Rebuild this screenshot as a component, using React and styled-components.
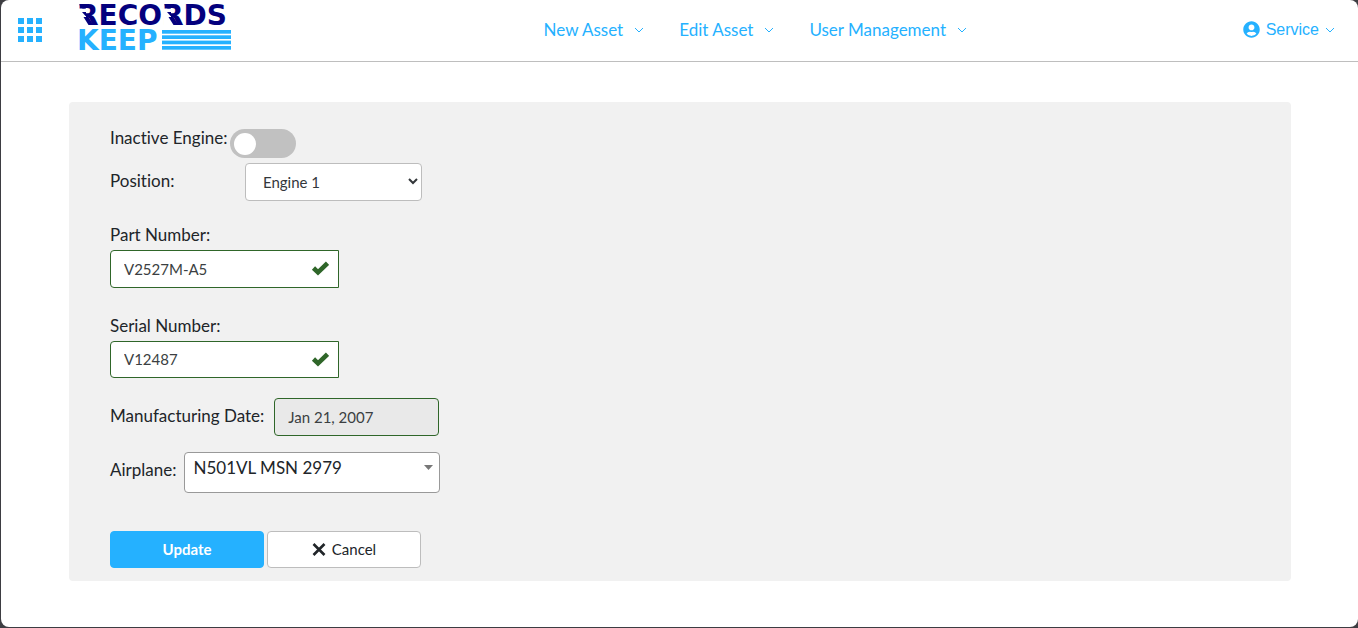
import React, { useState } from 'react'
import styled, { createGlobalStyle } from 'styled-components'
import { FaUserCircle } from 'react-icons/fa'

const blue = '#25b1ff'
const navy = '#04007d'
const green = '#2f6629'

const GlobalStyle = createGlobalStyle`
* {
  box-sizing: border-box;
}
body {
  margin: 0;
  background: #3d3d42;
  color: #212529;
  font-family: Lato, "Liberation Sans", sans-serif;
  font-size: 17px;
  font-variant-ligatures: none;
}
button, input, select {
  margin: 0;
  color: inherit;
  font-family: inherit;
}
`

const Page = styled.div`
  min-height: calc(100vh - 1px);
  margin: 0 0 1px 1px;
  background: #fff;
  border-radius: 8px;
`

const Header = styled.header`
  display: flex;
  align-items: center;
  justify-content: space-between;
  height: 62px;
  padding: 0 23px 2px 17px;
  border-bottom: 1px solid #bebebe;
`

const Brand = styled.div`
  display: flex;
  align-items: center;
  gap: 37px;
  min-width: 250px;
`

const IconButton = styled.button`
  display: flex;
  padding: 0;
  border: 0;
  background: none;
  cursor: pointer;
`

const LogoLink = styled.a`
  display: block;
  height: 51px;
`

const LogoText = styled.text`
  fill: ${(props) => props.$fill};
  font-family: "DejaVu Sans", sans-serif;
  font-size: 28px;
  font-weight: bold;
`

const Nav = styled.nav`
  display: flex;
  gap: 35px;
`

const MenuButton = styled.button`
  display: flex;
  align-items: center;
  gap: ${(props) => (props.$account ? '6px' : '11px')};
  padding: 0;
  border: 0;
  background: none;
  color: ${blue};
  font-family: ${(props) => (props.$account ? '"Liberation Sans", sans-serif' : 'inherit')};
  font-size: ${(props) => (props.$account ? '16px' : '17px')};
  line-height: 24px;
  cursor: pointer;
`

const Card = styled.form`
  margin: 40px 67px 0 68px;
  padding: 27px 41px 13px;
  background: #f1f1f1;
  border-radius: 4px;
`

const Row = styled.div`
  display: flex;
  align-items: flex-start;
  gap: ${(props) => props.$gap || 0}px;
  margin-top: ${(props) => props.$top || 0}px;
`

const Field = styled.div`
  margin-top: ${(props) => props.$top}px;
`

const Label = styled.label`
  display: block;
  min-width: ${(props) => props.$width || 0}px;
  line-height: ${(props) => props.$line || 30}px;
`

const Toggle = styled.input`
  appearance: none;
  width: 66px;
  height: 29px;
  padding: 4px;
  border-radius: 15px;
  background: ${(props) => (props.checked ? blue : '#c1c1c1')};
  cursor: pointer;

  &::before {
    content: "";
    display: block;
    width: 22px;
    height: 22px;
    margin-left: ${(props) => (props.checked ? '36px' : '0')};
    border-radius: 50%;
    background: #fff;
  }
`

const Control = styled.div`
  position: relative;
  width: ${(props) => props.$width}px;
`

const Adornment = styled.span`
  position: absolute;
  top: 0;
  right: ${(props) => props.$right}px;
  display: flex;
  align-items: center;
  height: ${(props) => props.$height || 37}px;
  color: ${(props) => props.$color};
  pointer-events: none;
`

const Input = styled.input`
  display: block;
  width: 100%;
  height: ${(props) => props.$height || 38}px;
  padding: 0 13px 1px;
  border: 1px solid ${green};
  border-radius: ${(props) => (props.readOnly ? '4px' : '4px 0 0 4px')};
  background: ${(props) => (props.readOnly ? '#e9e9e9' : '#fff')};
  color: #3b3f42;
  font-size: 15px;
`

const Select = styled.select`
  appearance: none;
  display: block;
  width: 100%;
  height: 38px;
  padding: 0 17px 1px;
  border: 1px solid #bdbdbd;
  border-radius: 4px;
  background: #fff;
  color: #33373a;
  font-size: 15px;
`

const AirplaneSelect = styled(Select)`
  height: 41px;
  padding: 0 8px 10px;
  border-color: #999;
  color: #212529;
  font-size: 17px;
`

const Button = styled.button`
  display: flex;
  align-items: center;
  justify-content: center;
  gap: 6px;
  width: 154px;
  height: 37px;
  padding: 0 0 1px;
  border: 1px solid ${(props) => (props.$primary ? blue : '#bdbdbd')};
  border-radius: 4px;
  background: ${(props) => (props.$primary ? blue : '#fff')};
  color: ${(props) => (props.$primary ? '#fff' : '#212529')};
  font-size: 15px;
  font-weight: ${(props) => (props.$primary ? 'bold' : 'normal')};
  cursor: pointer;
`

const menus = ['New Asset', 'Edit Asset', 'User Management']

function Chevron() {
  return (
    <svg width="10" height="6" viewBox="0 0 10 6" fill="none" stroke="currentColor" aria-hidden="true">
      <path d="M1 1l4 4 4-4" />
    </svg>
  )
}

function AppsIcon() {
  const cells = [0, 9, 18]
  return (
    <svg width="24" height="24" viewBox="0 0 24 24" fill={blue} aria-hidden="true">
      {cells.map((y) => cells.map((x) => <rect key={`${x}-${y}`} x={x} y={y} width="6" height="6" />))}
    </svg>
  )
}

function CheckIcon() {
  return (
    <svg width="18" height="15" viewBox="0 0 18 15" fill="none" stroke="currentColor" strokeWidth="4.600" aria-hidden="true">
      <path d="M2.500 7l4.500 4.300L16.500 2.200" />
    </svg>
  )
}

function CrossIcon() {
  return (
    <svg width="14" height="14" viewBox="0 0 14 14" fill="none" stroke="currentColor" strokeWidth="2.600" aria-hidden="true">
      <path d="M1.500 2l11 11M12.500 2l-11 11" />
    </svg>
  )
}

function Logo() {
  return (
    <svg width="153" height="51" viewBox="0 0 153 51" role="img" aria-label="Records Keep">
      <LogoText x="-2" y="21" $fill={navy}>RECORDS</LogoText>
      {/* slanted cut through the stem of both Rs */}
      {[0, 85].map((x) => (
        <g key={x} transform={`translate(${x} 0)`}>
          <path d="M0 4.500h7v17H0z" fill="#fff" />
          <path d="M0 0.600h7v4H3.500zM3 8h4v4H6.500zM4.500 13h5l5 8h-5z" fill={navy} />
        </g>
      ))}
      <LogoText x="-2" y="46" $fill={blue}>KEEP</LogoText>
      {[26, 31.3, 36.6, 42].map((y) => (
        <rect key={y} x="83" y={y} width="69" height="3.700" fill={blue} />
      ))}
    </svg>
  )
}

function TextField({ id, label, value, onChange, top, height }) {
  return (
    <Field $top={top}>
      <Label htmlFor={id}>{label}</Label>
      <Control $width={229}>
        <Input id={id} value={value} $height={height} onChange={(e) => onChange(e.target.value)} />
        <Adornment $right={10} $color={green}><CheckIcon /></Adornment>
      </Control>
    </Field>
  )
}

function App() {
  const [inactive, setInactive] = useState(false)
  const [partNumber, setPartNumber] = useState('V2527M-A5')
  const [serialNumber, setSerialNumber] = useState('V12487')

  return (
    <>
      <GlobalStyle />
      <Page>
        <Header>
          <Brand>
            <IconButton type="button" aria-label="Apps"><AppsIcon /></IconButton>
            <LogoLink href="#"><Logo /></LogoLink>
          </Brand>
          <Nav>
            {menus.map((item) => (
              <MenuButton type="button" key={item}>{item}<Chevron /></MenuButton>
            ))}
          </Nav>
          <MenuButton type="button" $account>
            <FaUserCircle size={17} />Service<Chevron />
          </MenuButton>
        </Header>
        <Card onSubmit={(e) => e.preventDefault()}>
          <Row $gap={3}>
            <Label htmlFor="inactive" $line={18}>Inactive Engine:</Label>
            <Toggle
              id="inactive"
              type="checkbox"
              role="switch"
              checked={inactive}
              onChange={(e) => setInactive(e.target.checked)}
            />
          </Row>
          <Row $top={5}>
            <Label htmlFor="position" $width={135} $line={36}>Position:</Label>
            <Control $width={177}>
              <Select id="position">
                <option>Engine 1</option>
                <option>Engine 2</option>
              </Select>
              <Adornment $right={4} $color="#33373a">
                <svg width="10" height="7" viewBox="0 0 10 7" fill="none" stroke="currentColor" strokeWidth="2" aria-hidden="true">
                  <path d="M1 1l4 4 4-4" />
                </svg>
              </Adornment>
            </Control>
          </Row>
          <TextField id="part" label="Part Number:" value={partNumber} onChange={setPartNumber} top={19} />
          <TextField id="serial" label="Serial Number:" value={serialNumber} onChange={setSerialNumber} top={23} height={37} />
          <Row $top={20} $gap={10}>
            <Label htmlFor="date" $line={36}>Manufacturing Date:</Label>
            <Control $width={165}>
              <Input id="date" value="Jan 21, 2007" readOnly />
            </Control>
          </Row>
          <Row $top={16} $gap={8}>
            <Label htmlFor="airplane" $line={36}>Airplane:</Label>
            <Control $width={256}>
              <AirplaneSelect id="airplane">
                <option>N501VL MSN 2979</option>
              </AirplaneSelect>
              <Adornment $right={7} $height={30} $color="#777">
                <svg width="9" height="5" viewBox="0 0 9 5" fill="currentColor" aria-hidden="true">
                  <path d="M0 0h9L4.500 5z" />
                </svg>
              </Adornment>
            </Control>
          </Row>
          <Row $top={38} $gap={3}>
            <Button type="submit" $primary>Update</Button>
            <Button type="button"><CrossIcon />Cancel</Button>
          </Row>
        </Card>
      </Page>
    </>
  )
}

export default App
